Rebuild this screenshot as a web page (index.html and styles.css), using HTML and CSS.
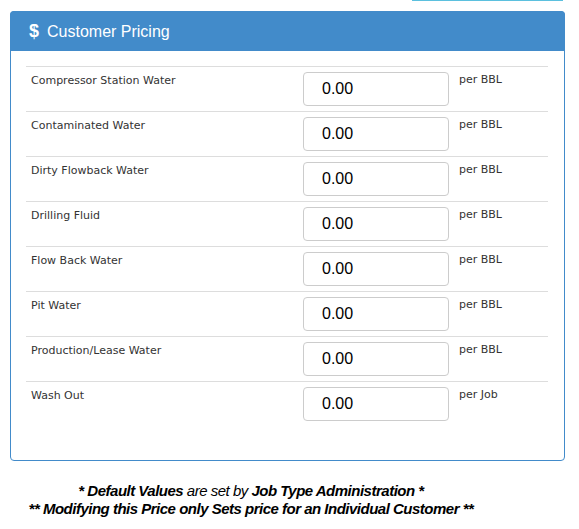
FILE: index.html
```html
<!DOCTYPE html>
<html>
<head>
<meta charset="utf-8">
<link rel="stylesheet" href="styles.css">
</head>
<body>
<div class="top-strip"></div>
<div class="panel">
  <div class="panel-heading"><span class="dollar">$</span>Customer Pricing</div>
  <div class="panel-body">
    <div class="row"><div class="label">Compressor Station Water</div><input class="price" value="0.00"><div class="unit">per BBL</div></div>
    <div class="row"><div class="label">Contaminated Water</div><input class="price" value="0.00"><div class="unit">per BBL</div></div>
    <div class="row"><div class="label">Dirty Flowback Water</div><input class="price" value="0.00"><div class="unit">per BBL</div></div>
    <div class="row"><div class="label">Drilling Fluid</div><input class="price" value="0.00"><div class="unit">per BBL</div></div>
    <div class="row"><div class="label">Flow Back Water</div><input class="price" value="0.00"><div class="unit">per BBL</div></div>
    <div class="row"><div class="label">Pit Water</div><input class="price" value="0.00"><div class="unit">per BBL</div></div>
    <div class="row"><div class="label">Production/Lease Water</div><input class="price" value="0.00"><div class="unit">per BBL</div></div>
    <div class="row"><div class="label">Wash Out</div><input class="price" value="0.00"><div class="unit">per Job</div></div>
  </div>
</div>
<div class="footer">
  <div><b>* Default Values</b> are set by <b>Job Type Administration *</b></div>
  <div><b>** Modifying this Price only Sets price for an Individual Customer **</b></div>
</div>
</body>
</html>
```
FILE: styles.css
```css
html, body {
  margin: 0;
  padding: 0;
  background: #fff;
}
body {
  font-family: "Liberation Sans", Arial, sans-serif;
  color: #333;
}
.top-strip {
  margin-left: 412px;
  width: 151px;
  height: 1px;
  background: #5bc0de;
}
.panel {
  margin: 10px 0 0 10px;
  width: 553px;
  border: 1px solid #428bca;
  border-radius: 4px;
  background: #fff;
}
.panel-heading {
  height: 40px;
  margin: -1px -1px 0 -1px;
  padding-left: 19px;
  background: #428bca;
  color: #fff;
  font-size: 16px;
  line-height: 40px;
  border-radius: 4px 4px 0 0;
}
.dollar {
  display: inline-block;
  font-weight: bold;
  font-size: 18px;
  margin-right: 8px;
}
.panel-body {
  padding: 15px 16px 34px 15px;
}
.row {
  display: grid;
  grid-template-columns: 277px 146px 1fr;
  height: 44px;
  border-top: 1px solid #ddd;
  font-family: "DejaVu Sans", Verdana, sans-serif;
  font-size: 11px;
}
.label {
  padding: 6px 0 0 5px;
  line-height: 16px;
}
.unit {
  padding: 5px 0 0 10px;
  line-height: 16px;
}
.price {
  margin-top: 5px;
  box-sizing: border-box;
  width: 146px;
  height: 34px;
  border: 1px solid #ccc;
  border-radius: 4px;
  padding: 0 0 0 18px;
  font-family: "Liberation Sans", Arial, sans-serif;
  font-size: 16px;
  color: #000;
  background: #fff;
}
.footer {
  width: 502px;
  margin-top: 21px;
  text-align: center;
  font-style: italic;
  font-size: 15px;
  letter-spacing: -0.5px;
  line-height: 18px;
  color: #000;
}
```
